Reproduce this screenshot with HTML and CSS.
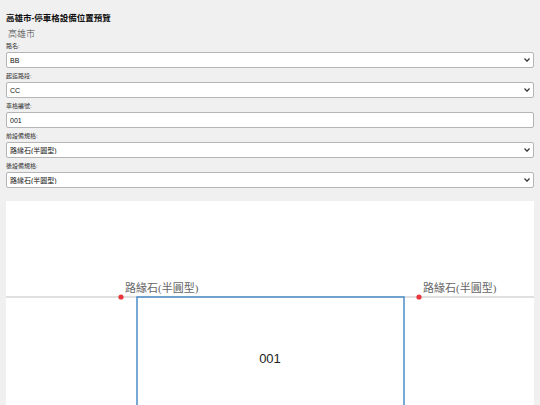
FILE: index.html
```html
<!DOCTYPE html>
<html lang="zh-Hant">
<head>
<meta charset="utf-8">
<link rel="stylesheet" href="styles.css">
</head>
<body>
<div class="page">
  <h1 class="title">高雄市-停車格設備位置預覽</h1>
  <div class="city">高雄市</div>
  <div class="field">
    <label class="label">路名:</label>
    <div class="select-wrap">
      <select class="control"><option>BB</option></select>
      <svg class="chev" width="6" height="4" viewBox="0 0 6 4"><path d="M0.5 0.5 L3 3.2 L5.5 0.5" fill="none" stroke="#333" stroke-width="1.2"/></svg>
    </div>
  </div>
  <div class="field">
    <label class="label">起迄路段:</label>
    <div class="select-wrap">
      <select class="control"><option>CC</option></select>
      <svg class="chev" width="6" height="4" viewBox="0 0 6 4"><path d="M0.5 0.5 L3 3.2 L5.5 0.5" fill="none" stroke="#333" stroke-width="1.2"/></svg>
    </div>
  </div>
  <div class="field">
    <label class="label">車格編號:</label>
    <input class="control" type="text" value="001">
  </div>
  <div class="field">
    <label class="label">前設備規格:</label>
    <div class="select-wrap">
      <select class="control"><option>路緣石(半圓型)</option></select>
      <svg class="chev" width="6" height="4" viewBox="0 0 6 4"><path d="M0.5 0.5 L3 3.2 L5.5 0.5" fill="none" stroke="#333" stroke-width="1.2"/></svg>
    </div>
  </div>
  <div class="field">
    <label class="label">後設備規格:</label>
    <div class="select-wrap">
      <select class="control"><option>路緣石(半圓型)</option></select>
      <svg class="chev" width="6" height="4" viewBox="0 0 6 4"><path d="M0.5 0.5 L3 3.2 L5.5 0.5" fill="none" stroke="#333" stroke-width="1.2"/></svg>
    </div>
  </div>
  <div class="canvas">
    <svg class="diagram" width="528" height="220" viewBox="0 0 528 220">
      <line x1="0" y1="96" x2="528" y2="96" stroke="#d6d6d6" stroke-width="1.5"/>
      <rect x="131" y="96" width="267" height="140" fill="none" stroke="#4a8fc7" stroke-width="1.5"/>
      <circle cx="115" cy="96" r="2.6" fill="#e8383b"/>
      <circle cx="413" cy="96" r="2.6" fill="#e8383b"/>
      <text class="spec" x="119" y="91">路緣石(半圓型)</text>
      <text class="spec" x="417" y="91">路緣石(半圓型)</text>
      <text class="num" x="264" y="162" text-anchor="middle">001</text>
    </svg>
  </div>
</div>
</body>
</html>
```

FILE: styles.css
```css
html, body {
  margin: 0;
  padding: 0;
  background: #f0f0f0;
  font-family: "Liberation Sans", Arial, "Noto Sans CJK TC", sans-serif;
  overflow: hidden;
}
.page {
  padding: 12px 6px 0 6px;
  display: flex;
  flex-direction: column;
}
.title {
  margin: 0;
  font-size: 8.5px;
  font-weight: bold;
  color: #111;
  line-height: 12px;
}
.city {
  margin: 4px 0 2px 2px;
  font-size: 9px;
  color: #444;
  font-family: "Noto Sans CJK TC", sans-serif;
  font-weight: 300;
  line-height: 12px;
}
.field {
  display: flex;
  flex-direction: column;
  margin-bottom: 4px;
}
.label {
  font-size: 6px;
  color: #333;
  line-height: 8px;
  margin-bottom: 2px;
}
.select-wrap {
  position: relative;
}
.chev {
  position: absolute;
  right: 4px;
  top: 6px;
  pointer-events: none;
}
.control {
  box-sizing: border-box;
  display: block;
  width: 100%;
  height: 16px;
  font-size: 7px;
  font-family: "Liberation Sans", Arial, "Noto Sans CJK TC", sans-serif;
  border: 1px solid #b5b5b5;
  border-radius: 2px;
  background: #fff;
  padding: 0 3px;
  color: #111;
  margin: 0;
  -webkit-appearance: none;
  appearance: none;
  outline: none;
}
.canvas {
  margin-top: 9px;
  background: #fff;
  height: 220px;
}
.diagram {
  display: block;
}
.spec {
  font-family: "Liberation Serif", "Noto Sans CJK TC", serif;
  font-size: 11px;
  fill: #666;
}
.num {
  font-family: "Liberation Sans", Arial, sans-serif;
  font-size: 13px;
  fill: #222;
}
```
